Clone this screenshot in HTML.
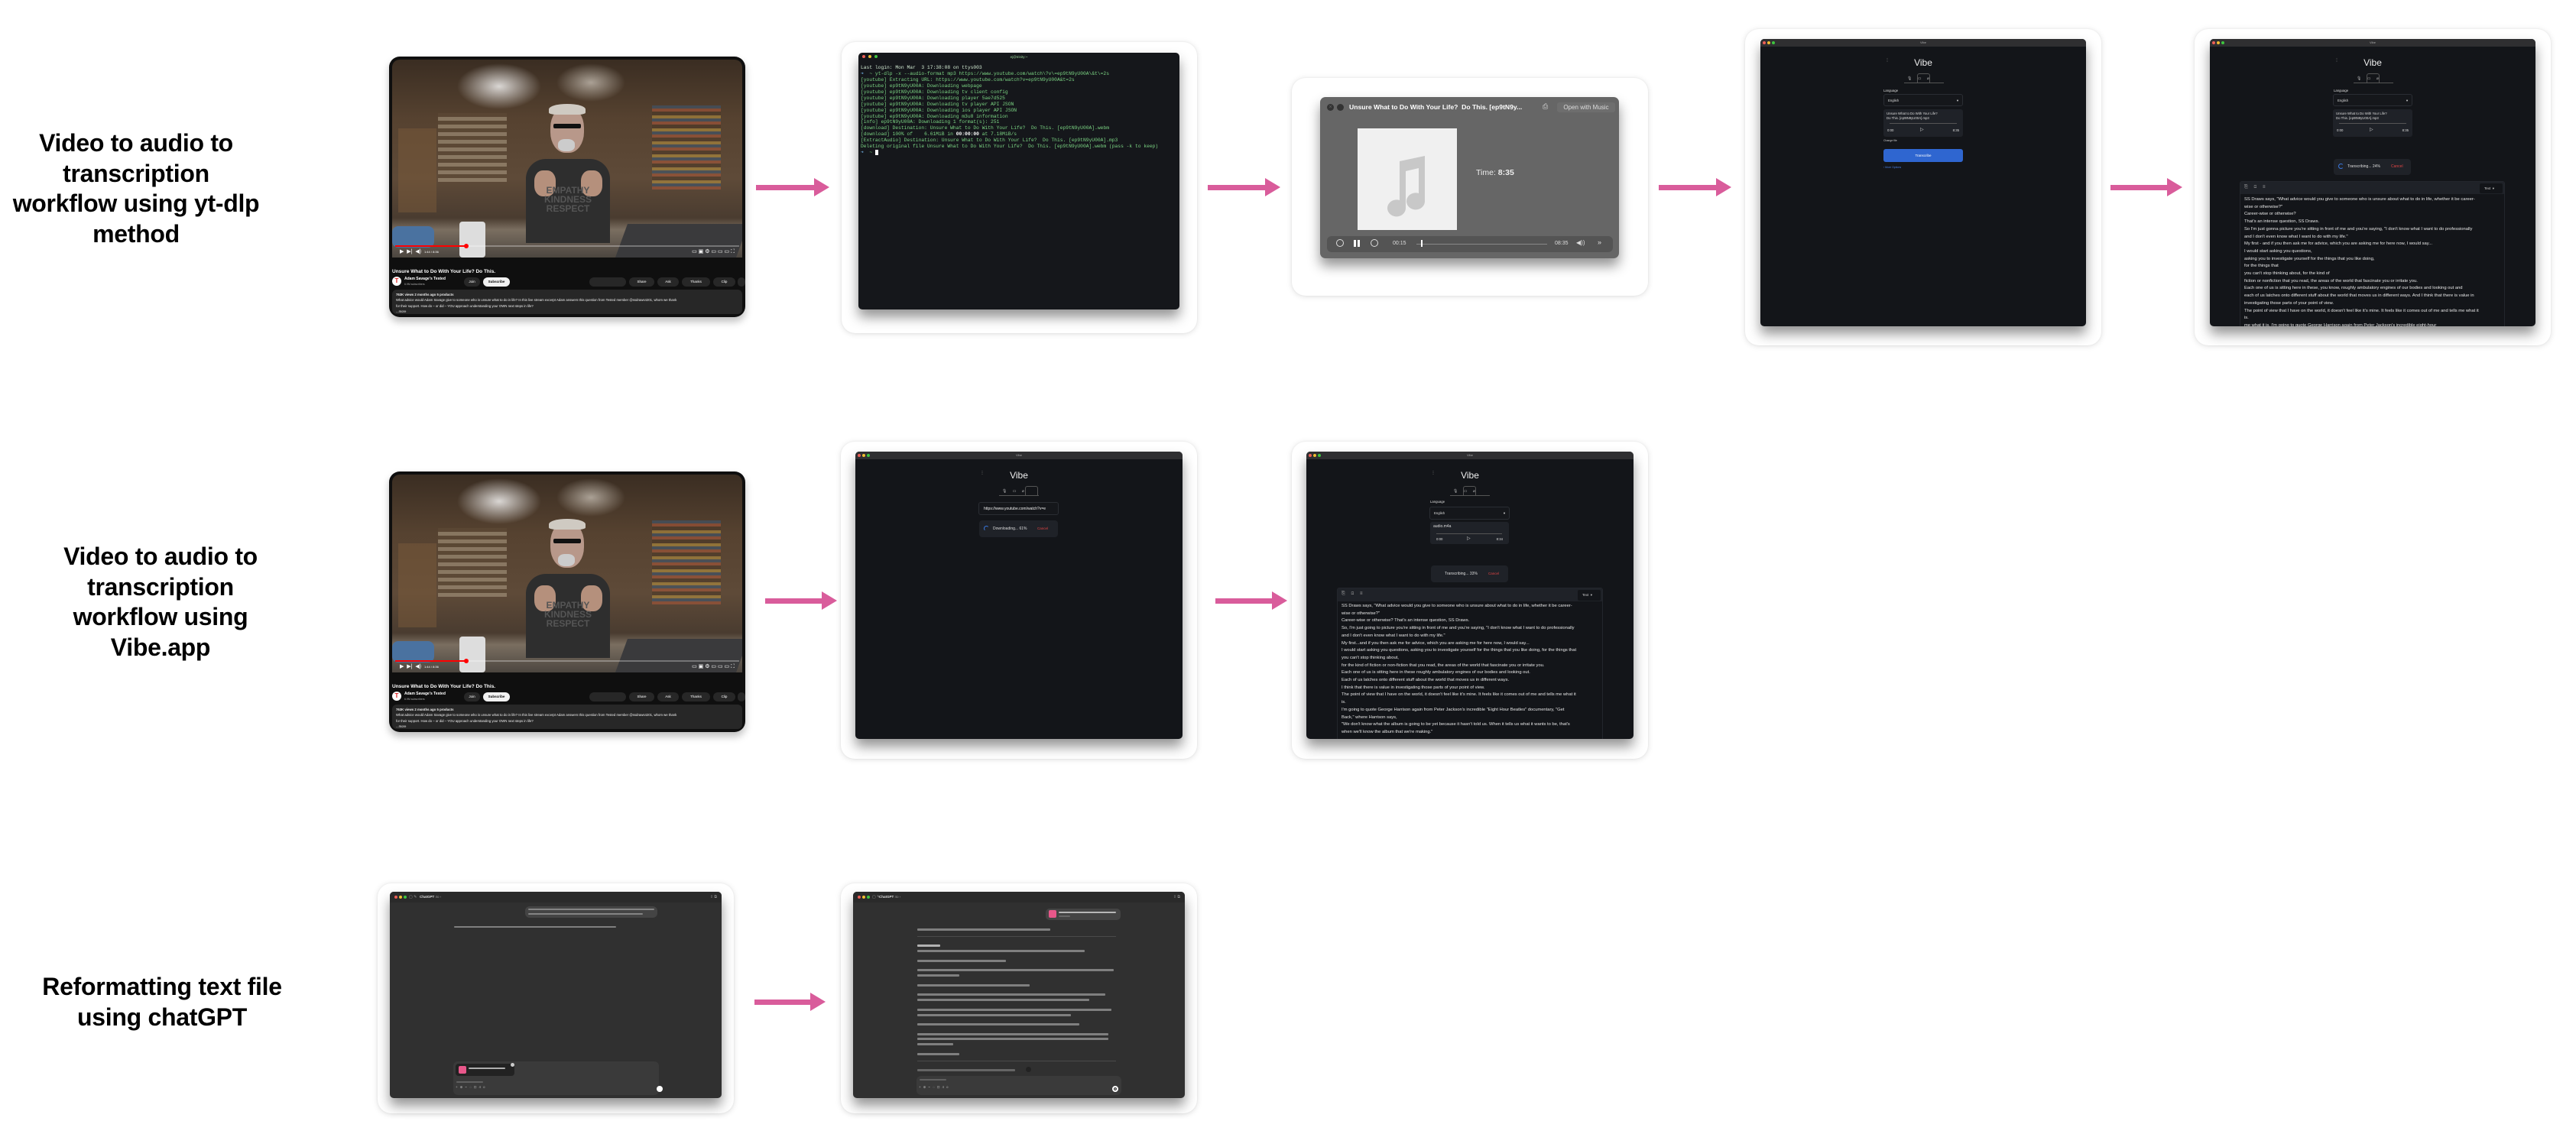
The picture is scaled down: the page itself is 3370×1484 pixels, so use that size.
<!DOCTYPE html>
<html><head><meta charset="utf-8">
<style>
*{margin:0;padding:0;box-sizing:border-box}
body{width:3370px;height:1484px;background:#fff;position:relative;overflow:hidden;font-family:"Liberation Sans",sans-serif}
.lbl{position:absolute;width:420px;text-align:center;font-weight:bold;font-size:32px;line-height:39.5px;color:#000;letter-spacing:-0.3px}
.card{position:absolute;background:#fff;border-radius:18px;box-shadow:0 1px 8px rgba(0,0,0,.13),0 0 2px rgba(0,0,0,.06)}
.arrow{position:absolute;height:24px}
.arrow .s{position:absolute;left:0;top:8.5px;height:7px;background:#d95c9b;right:18px}
.arrow .h{position:absolute;right:0;top:0;width:0;height:0;border-top:12px solid transparent;border-bottom:12px solid transparent;border-left:20px solid #d95c9b}
.win{position:absolute;border-radius:5px;overflow:hidden;box-shadow:0 10px 16px rgba(0,0,0,.42)}
.a{position:absolute}
.tl{position:absolute;top:3px;width:4px;height:4px;border-radius:50%}
.vtb{position:absolute;left:0;top:0;right:0;height:10px;background:#2f2f31;font-size:4px;color:#aaa;text-align:center;line-height:10px}
.vibe{background:#131519}
.vt{position:absolute;left:0;right:0;text-align:center;color:#eee;font-size:12px;top:24px}
.box{position:absolute;border:1px solid #2a2d33;border-radius:3px;background:#15171b}
.fbox{position:absolute;background:#1f2228;border-radius:3px;color:#ddd;font-size:4.3px;line-height:6px;padding:3px 4px}
.pbox{position:absolute;background:#1f2228;border-radius:4px;color:#ddd;font-size:5px}
.tx{position:absolute;color:#e6e6e6;font-size:5.8px;line-height:9.7px;white-space:nowrap}
.mono{font-family:"Liberation Mono",monospace}
.gl{position:absolute;height:3px;background:#9a9a9a;border-radius:1px;opacity:.75}
</style></head><body>

<div class="lbl" style="left:-32px;top:168px">Video to audio to<br>transcription<br>workflow using yt-dlp<br>method</div>
<div class="lbl" style="left:0;top:709px">Video to audio to<br>transcription<br>workflow using<br>Vibe.app</div>
<div class="lbl" style="left:2px;top:1272px">Reformatting text file<br>using chatGPT</div>

<div class="arrow" style="left:989px;top:233px;width:96px"><div class="s"></div><div class="h"></div></div>
<div class="arrow" style="left:1580px;top:233px;width:95px"><div class="s"></div><div class="h"></div></div>
<div class="arrow" style="left:2170px;top:233px;width:95px"><div class="s"></div><div class="h"></div></div>
<div class="arrow" style="left:2761px;top:233px;width:94px"><div class="s"></div><div class="h"></div></div>
<div class="arrow" style="left:1001px;top:774px;width:94px"><div class="s"></div><div class="h"></div></div>
<div class="arrow" style="left:1590px;top:774px;width:94px"><div class="s"></div><div class="h"></div></div>
<div class="arrow" style="left:987px;top:1299px;width:93px"><div class="s"></div><div class="h"></div></div>

<div id="yt1" class="a" style="left:509px;top:74px;width:466px;height:341px;background:#0f0f0f;border-radius:14px;box-shadow:0 6px 10px rgba(0,0,0,.25);overflow:hidden">
  <div class="a" style="left:4px;top:4px;width:458px;height:259px;border-radius:10px 10px 0 0;overflow:hidden;background:linear-gradient(180deg,#3a2d22 0%,#564230 30%,#5e4a38 60%,#4a3c30 80%,#7a6e60 86%,#4c4640 100%)">
    <div class="a" style="left:0;top:0;width:458px;height:259px;background:radial-gradient(ellipse 55px 30px at 140px 35px,rgba(255,255,255,.8),rgba(255,255,255,0)),radial-gradient(ellipse 45px 25px at 260px 30px,rgba(255,250,240,.55),rgba(255,255,255,0))"></div>
    <div class="a" style="left:60px;top:70px;width:90px;height:90px;background:repeating-linear-gradient(0deg,#a89880 0 5px,#5d4a36 5px 10px);opacity:.6"></div>
    <div class="a" style="left:340px;top:60px;width:90px;height:110px;background:repeating-linear-gradient(0deg,#b85a3a 0 4px,#3a5a7a 4px 8px,#c8a040 8px 12px,#4a3624 12px 17px);opacity:.5"></div>
    <div class="a" style="left:8px;top:90px;width:50px;height:110px;background:#7a5a3a;opacity:.5"></div>
    <div class="a" style="left:175px;top:130px;width:110px;height:110px;background:#2e2e2e;border-radius:26px 26px 0 0"></div>
    <div class="a" style="left:207px;top:62px;width:44px;height:60px;background:#b8988a;border-radius:45%"></div>
    <div class="a" style="left:205px;top:58px;width:48px;height:14px;background:#cfcac2;border-radius:50% 50% 20% 20%"></div>
    <div class="a" style="left:211px;top:84px;width:36px;height:6px;background:#111;border-radius:2px"></div>
    <div class="a" style="left:217px;top:104px;width:22px;height:16px;background:#ccc;border-radius:40%"></div>
    <div class="a" style="left:186px;top:145px;width:28px;height:34px;background:#b5907c;border-radius:40%"></div>
    <div class="a" style="left:247px;top:145px;width:28px;height:34px;background:#b5907c;border-radius:40%"></div>
    <div class="a" style="left:190px;top:165px;color:#555;font-weight:bold;font-size:12px;line-height:12px;text-align:center;width:80px">EMPATHY KINDNESS RESPECT</div>
    <div class="a" style="left:88px;top:212px;width:34px;height:47px;background:#ddd;border-radius:4px"></div>
    <div class="a" style="left:0;top:218px;width:55px;height:28px;background:#4a72a0;border-radius:8px"></div>
    <div class="a" style="left:300px;top:215px;width:158px;height:44px;background:#3a3a3c;transform:skewX(-20deg)"></div>
    <div class="a" style="left:4px;top:243px;width:450px;height:2px;background:rgba(255,255,255,.3)"></div>
    <div class="a" style="left:4px;top:243px;width:92px;height:2px;background:#f00"></div>
    <div class="a" style="left:94px;top:241px;width:6px;height:6px;background:#f00;border-radius:50%"></div>
    <div class="a" style="left:10px;top:247px;color:#fff;font-size:7px">▶ &nbsp;▶| &nbsp;◀) &nbsp;<span style="font-size:4px">1:44 / 8:36</span></div>
    <div class="a" style="right:10px;top:247px;color:#fff;font-size:7px">▭ ▣ ⚙ ▭ ▭ ▭ ⛶</div>
  </div>
  <div class="a" style="left:4px;top:278px;color:#fff;font-weight:bold;font-size:6.5px">Unsure What to Do With Your Life? Do This.</div>
  <div class="a" style="left:4px;top:288px;width:12px;height:12px;border-radius:50%;background:#fff;color:#d22;font-weight:bold;font-size:8px;text-align:center;line-height:12px">T</div>
  <div class="a" style="left:20px;top:288px;color:#fff;font-size:5px;font-weight:bold">Adam Savage's Tested</div>
  <div class="a" style="left:20px;top:296px;color:#aaa;font-size:3.5px">6.9M subscribers</div>
  <div class="a" style="left:98px;top:289px;width:21px;height:12px;border-radius:6px;background:#272727;color:#fff;font-size:4.5px;text-align:center;line-height:12px">Join</div>
  <div class="a" style="left:123px;top:289px;width:35px;height:12px;border-radius:6px;background:#f1f1f1;color:#000;font-size:4.5px;text-align:center;line-height:12px;font-weight:bold">Subscribe</div>
  <div class="a" style="left:262px;top:289px;width:48px;height:12px;border-radius:6px;background:#272727"></div>
  <div class="a" style="left:314px;top:289px;width:33px;height:12px;border-radius:6px;background:#272727;color:#fff;font-size:4.5px;line-height:12px;text-align:center">Share</div>
  <div class="a" style="left:351px;top:289px;width:28px;height:12px;border-radius:6px;background:#272727;color:#fff;font-size:4.5px;line-height:12px;text-align:center">Ask</div>
  <div class="a" style="left:383px;top:289px;width:37px;height:12px;border-radius:6px;background:#272727;color:#fff;font-size:4.5px;line-height:12px;text-align:center">Thanks</div>
  <div class="a" style="left:424px;top:289px;width:29px;height:12px;border-radius:6px;background:#272727;color:#fff;font-size:4.5px;line-height:12px;text-align:center">Clip</div>
  <div class="a" style="left:456px;top:289px;width:10px;height:12px;border-radius:6px;background:#272727"></div>
  <div class="a" style="left:4px;top:305px;width:458px;height:32px;background:#272727;border-radius:6px;color:#eee;font-size:4.3px;line-height:7.3px;padding:3px 5px">
    <b>763K views 2 months ago 5 products</b><br>What advice would Adam Savage give to someone who is unsure what to do in life? In this live stream excerpt Adam answers this question from Tested member @ssdraws4201, whom we thank<br>for their support. How do – or did – YOU approach understanding your OWN next steps in life?<br>...more</div>
</div>

<div class="card" style="left:1101px;top:55px;width:465px;height:381px"></div>
<div class="win" style="left:1123px;top:69px;width:420px;height:336px;background:#15171b">
  <div class="tl" style="left:5px;background:#ec5f57"></div>
  <div class="tl" style="left:13px;background:#f0bd31"></div>
  <div class="tl" style="left:21px;background:#3ec43f"></div>
  <div class="a" style="left:0;right:0;top:3px;text-align:center;font-size:4.5px;color:#9ad59a">ej@trinity:~</div>
  <div class="a mono" style="left:3px;top:16px;font-size:6.3px;line-height:7.93px;color:#7bd483;white-space:pre;width:417px;overflow:hidden"><span style="color:#cfe7cf">Last login: Mon Mar  3 17:38:08 on ttys003</span>
<span style="color:#6ca7d8">➜</span>  ~ yt-dlp -x --audio-format mp3 https://www.youtube.com/watch\?v\=ep9tN9yU00A\&amp;t\=2s
[youtube] Extracting URL: https://www.youtube.com/watch?v=ep9tN9yU00A&amp;t=2s
[youtube] ep9tN9yU00A: Downloading webpage
[youtube] ep9tN9yU00A: Downloading tv client config
[youtube] ep9tN9yU00A: Downloading player 5ae7d525
[youtube] ep9tN9yU00A: Downloading tv player API JSON
[youtube] ep9tN9yU00A: Downloading ios player API JSON
[youtube] ep9tN9yU00A: Downloading m3u8 information
[info] ep9tN9yU00A: Downloading 1 format(s): 251
[download] Destination: Unsure What to Do With Your Life?  Do This. [ep9tN9yU00A].webm
[download] 100% of    6.61MiB in <b style="color:#fff">00:00:00</b> at 7.18MiB/s
[ExtractAudio] Destination: Unsure What to Do With Your Life?  Do This. [ep9tN9yU00A].mp3
Deleting original file Unsure What to Do With Your Life?  Do This. [ep9tN9yU00A].webm (pass -k to keep)
<span style="color:#6ca7d8">➜</span>  ~ <span style="background:#fff">&nbsp;</span></div>
</div>

<div class="card" style="left:1690px;top:102px;width:466px;height:285px"></div>
<div class="win" style="left:1727px;top:127px;width:391px;height:211px;background:#666;border-radius:7px">
  <div class="a" style="left:9px;top:9px;width:9px;height:9px;border-radius:50%;background:#333;color:#666;font-size:7px;text-align:center;line-height:9px">×</div>
  <div class="a" style="left:22px;top:9px;width:9px;height:9px;border-radius:50%;background:#333"></div>
  <div class="a" style="left:38px;top:8px;color:#fff;font-weight:bold;font-size:8.6px;white-space:nowrap">Unsure What to Do With Your Life?&nbsp; Do This. [ep9tN9y...</div>
  <div class="a" style="left:291px;top:7px;color:#ddd;font-size:9px">⎙</div>
  <div class="a" style="left:310px;top:7px;width:76px;height:13px;border-radius:3px;background:#6e6e6e;color:#ddd;font-size:8px;text-align:center;line-height:13px;white-space:nowrap">Open with Music</div>
  <div class="a" style="left:49px;top:41px;width:130px;height:133px;background:#f0f0f0">
    <svg width="130" height="133" viewBox="0 0 130 133"><path d="M55 43 L88 36 L88 95 A12 11 0 1 1 80 85 L80 52 L63 56 L63 104 A12 11 0 1 1 55 94 Z" fill="#c8c8c8"/></svg>
  </div>
  <div class="a" style="left:204px;top:93px;color:#eee;font-size:10.5px">Time: <b>8:35</b></div>
  <div class="a" style="left:9px;top:182px;width:374px;height:21px;border-radius:6px;background:#545454">
    <div class="a" style="left:12px;top:4px;width:10px;height:10px;border:1.2px solid #ddd;border-radius:50%"></div>
    <div class="a" style="left:35px;top:5px;width:2.5px;height:9px;background:#fff"></div><div class="a" style="left:40px;top:5px;width:2.5px;height:9px;background:#fff"></div>
    <div class="a" style="left:57px;top:4px;width:10px;height:10px;border:1.2px solid #ddd;border-radius:50%"></div>
    <div class="a" style="left:86px;top:6px;color:#ddd;font-size:7px">00:15</div>
    <div class="a" style="left:117px;top:10px;width:171px;height:1px;background:#888"></div>
    <div class="a" style="left:123px;top:5px;width:1.5px;height:9px;background:#fff"></div>
    <div class="a" style="left:298px;top:6px;color:#ddd;font-size:7px">08:35</div>
    <div class="a" style="left:326px;top:4px;color:#ddd;font-size:8px">◀))</div>
    <div class="a" style="left:354px;top:3px;color:#ddd;font-size:9px">»</div>
  </div>
</div>

<div class="card" style="left:2283px;top:38px;width:466px;height:414px"></div>
<div class="win vibe" style="left:2303px;top:51px;width:426px;height:376px">
  <div class="vtb">Vibe</div>
  <div class="tl" style="left:3px;background:#ec5f57"></div><div class="tl" style="left:9px;background:#f0bd31"></div><div class="tl" style="left:15px;background:#3ec43f"></div>
  <div class="a" style="left:165px;top:25px;color:#aaa;font-size:6px;line-height:2px">·<br>·<br>·</div>
  <div class="vt">Vibe</div>
  <div class="a" style="left:188px;top:47px;width:52px;height:11px;border-bottom:1px solid #555"></div>
  <div class="a" style="left:205px;top:45px;width:17px;height:12px;border:1px solid #555;border-bottom:none;border-radius:3px 3px 0 0;background:#131519"></div>
  <div class="a" style="left:192px;top:49px;color:#bbb;font-size:5px;word-spacing:6px">🎙 ▭ ⌀</div>
  <div class="a" style="left:161px;top:65px;color:#ddd;font-size:4.3px">Language</div>
  <div class="box" style="left:161px;top:72px;width:104px;height:16px;color:#ddd;font-size:4.3px;padding:5px 5px">English<span style="float:right">▾</span></div>
  <div class="fbox" style="left:161px;top:92px;width:104px;height:36px">Unsure What to Do With Your Life?<br>Do This. [ep9tN9yU00A].mp3
    <div class="a" style="left:8px;top:18px;width:88px;height:1px;background:#555"></div>
    <div class="a" style="left:5px;top:25px">0:00</div><div class="a" style="left:48px;top:24px;font-size:6px">▷</div><div class="a" style="right:5px;top:25px">8:35</div></div>
  <div class="a" style="left:161px;top:131px;color:#ccc;font-size:3.5px">Change file</div>
  <div class="a" style="left:161px;top:144px;width:104px;height:17px;background:#2f66d0;border-radius:3px;color:#fff;font-size:4.5px;text-align:center;line-height:17px">Transcribe</div>
  <div class="a" style="left:161px;top:166px;color:#4a7fe0;font-size:3.5px">› More Options</div>
</div>

<div class="card" style="left:2871px;top:38px;width:466px;height:414px"></div>
<div class="win vibe" style="left:2891px;top:51px;width:426px;height:376px">
  <div class="vtb">Vibe</div>
  <div class="tl" style="left:3px;background:#ec5f57"></div><div class="tl" style="left:9px;background:#f0bd31"></div><div class="tl" style="left:15px;background:#3ec43f"></div>
  <div class="a" style="left:165px;top:25px;color:#aaa;font-size:6px;line-height:2px">·<br>·<br>·</div>
  <div class="vt">Vibe</div>
  <div class="a" style="left:188px;top:47px;width:52px;height:11px;border-bottom:1px solid #555"></div>
  <div class="a" style="left:205px;top:45px;width:17px;height:12px;border:1px solid #555;border-bottom:none;border-radius:3px 3px 0 0;background:#131519"></div>
  <div class="a" style="left:192px;top:49px;color:#bbb;font-size:5px;word-spacing:6px">🎙 ▭ ⌀</div>
  <div class="a" style="left:162px;top:65px;color:#ddd;font-size:4.3px">Language</div>
  <div class="box" style="left:161px;top:72px;width:104px;height:16px;color:#ddd;font-size:4.3px;padding:5px 5px">English<span style="float:right">▾</span></div>
  <div class="fbox" style="left:161px;top:92px;width:104px;height:36px">Unsure What to Do With Your Life?<br>Do This. [ep9tN9yU00A].mp3
    <div class="a" style="left:8px;top:18px;width:88px;height:1px;background:#555"></div>
    <div class="a" style="left:5px;top:25px">0:00</div><div class="a" style="left:48px;top:24px;font-size:6px">▷</div><div class="a" style="right:5px;top:25px">8:35</div></div>
  <div class="pbox" style="left:162px;top:157px;width:101px;height:21px"><span class="a" style="left:6px;top:6px;width:7px;height:7px;border:1.3px solid #3a78e0;border-radius:50%;border-right-color:transparent"></span><span class="a" style="left:18px;top:7px">Transcribing... 24%</span><span class="a" style="left:75px;top:7px;color:#e04444">Cancel</span></div>
  <div class="a" style="left:39px;top:186px;width:347px;height:200px;border:1px solid #23262c;border-radius:3px">
    <div class="a" style="left:0;top:0;right:0;height:16px;background:#1f2228"></div>
    <div class="a" style="left:5px;top:4px;color:#aaa;font-size:6px;word-spacing:6px">⎘ ⊡ ≡</div>
    <div class="a" style="right:2px;top:2px;width:30px;height:13px;background:#131519;border-radius:2px;color:#ccc;font-size:4.5px;line-height:13px;padding-left:6px">Text &nbsp;▾</div>
  </div>
  <div class="tx" style="left:45px;top:206px">SS Draws says, "What advice would you give to someone who is unsure about what to do in life, whether it be career-<br>wise or otherwise?"<br>Career-wise or otherwise?<br>That's an intense question, SS Draws.<br>So I'm just gonna picture you're sitting in front of me and you're saying, "I don't know what I want to do professionally<br>and I don't even know what I want to do with my life."<br>My first - and if you then ask me for advice, which you are asking me for here now, I would say...<br>I would start asking you questions,<br>asking you to investigate yourself for the things that you like doing,<br>for the things that<br>you can't stop thinking about, for the kind of<br>fiction or nonfiction that you read, the areas of the world that fascinate you or irritate you.<br>Each one of us is sitting here in these, you know, roughly ambulatory engines of our bodies and looking out and<br>each of us latches onto different stuff about the world that moves us in different ways. And I think that there is value in<br>investigating those parts of your point of view.<br>The point of view that I have on the world, it doesn't feel like it's mine. It feels like it comes out of me and tells me what it<br>is.<br>me what it is. I'm going to quote George Harrison again from Peter Jackson's incredible eight-hour</div>
</div>

<div class="card" style="left:1100px;top:578px;width:466px;height:415px"></div>
<div class="win vibe" style="left:1119px;top:591px;width:428px;height:376px">
  <div class="vtb">Vibe</div>
  <div class="tl" style="left:3px;background:#ec5f57"></div><div class="tl" style="left:9px;background:#f0bd31"></div><div class="tl" style="left:15px;background:#3ec43f"></div>
  <div class="a" style="left:165px;top:25px;color:#aaa;font-size:6px;line-height:2px">·<br>·<br>·</div>
  <div class="vt">Vibe</div>
  <div class="a" style="left:188px;top:47px;width:52px;height:11px;border-bottom:1px solid #555"></div>
  <div class="a" style="left:222px;top:45px;width:17px;height:12px;border:1px solid #555;border-bottom:none;border-radius:3px 3px 0 0;background:#131519"></div>
  <div class="a" style="left:192px;top:49px;color:#bbb;font-size:5px;word-spacing:6px">🎙 ▭ ⌀</div>
  <div class="box" style="left:161px;top:66px;width:105px;height:17px;color:#eee;font-size:5px;padding:5px 6px;white-space:nowrap;overflow:hidden">https://www.youtube.com/watch?v=e</div>
  <div class="pbox" style="left:162px;top:90px;width:103px;height:22px"><span class="a" style="left:6px;top:7px;width:7px;height:7px;border:1.3px solid #3a78e0;border-radius:50%;border-bottom-color:transparent;border-right-color:transparent"></span><span class="a" style="left:18px;top:8px">Downloading... 61%</span><span class="a" style="left:76px;top:8px;color:#e04444;font-size:4.5px">Cancel</span></div>
</div>

<div class="card" style="left:1690px;top:578px;width:466px;height:415px"></div>
<div class="win vibe" style="left:1709px;top:591px;width:428px;height:376px">
  <div class="vtb">Vibe</div>
  <div class="tl" style="left:3px;background:#ec5f57"></div><div class="tl" style="left:9px;background:#f0bd31"></div><div class="tl" style="left:15px;background:#3ec43f"></div>
  <div class="a" style="left:165px;top:25px;color:#aaa;font-size:6px;line-height:2px">·<br>·<br>·</div>
  <div class="vt">Vibe</div>
  <div class="a" style="left:188px;top:47px;width:52px;height:11px;border-bottom:1px solid #555"></div>
  <div class="a" style="left:205px;top:45px;width:17px;height:12px;border:1px solid #555;border-bottom:none;border-radius:3px 3px 0 0;background:#131519"></div>
  <div class="a" style="left:192px;top:49px;color:#bbb;font-size:5px;word-spacing:6px">🎙 ▭ ⌀</div>
  <div class="a" style="left:162px;top:63px;color:#ddd;font-size:4.3px">Language</div>
  <div class="box" style="left:161px;top:72px;width:105px;height:17px;color:#ddd;font-size:4.3px;padding:5px 5px">English<span style="float:right">▾</span></div>
  <div class="fbox" style="left:162px;top:92px;width:103px;height:29px;font-size:5px">audio.m4a
    <div class="a" style="left:8px;top:15px;width:86px;height:1px;background:#555"></div>
    <div class="a" style="left:8px;top:20px;font-size:4.3px">0:00</div><div class="a" style="left:48px;top:19px;font-size:6px">▷</div><div class="a" style="right:8px;top:20px;font-size:4.3px">8:34</div></div>
  <div class="pbox" style="left:163px;top:149px;width:101px;height:22px"><span class="a" style="left:18px;top:8px">Transcribing... 33%</span><span class="a" style="left:75px;top:8px;color:#e04444;font-size:4.5px">Cancel</span></div>
  <div class="a" style="left:40px;top:178px;width:348px;height:200px;border:1px solid #23262c;border-radius:3px">
    <div class="a" style="left:0;top:0;right:0;height:17px;background:#1f2228"></div>
    <div class="a" style="left:5px;top:4px;color:#aaa;font-size:6px;word-spacing:6px">⎘ ⊡ ≡</div>
    <div class="a" style="right:2px;top:2px;width:30px;height:14px;background:#131519;border-radius:2px;color:#ccc;font-size:4.5px;line-height:14px;padding-left:6px">Text &nbsp;▾</div>
  </div>
  <div class="tx" style="left:46px;top:198px">SS Draws says, "What advice would you give to someone who is unsure about what to do in life, whether it be career-<br>wise or otherwise?"<br>Career-wise or otherwise? That's an intense question, SS Draws.<br>So, I'm just going to picture you're sitting in front of me and you're saying, "I don't know what I want to do professionally<br>and I don't even know what I want to do with my life."<br>My first...and if you then ask me for advice, which you are asking me for here now, I would say...<br>I would start asking you questions, asking you to investigate yourself for the things that you like doing, for the things that<br>you can't stop thinking about,<br>for the kind of fiction or non-fiction that you read, the areas of the world that fascinate you or irritate you.<br>Each one of us is sitting here in these roughly ambulatory engines of our bodies and looking out.<br>Each of us latches onto different stuff about the world that moves us in different ways.<br>I think that there is value in investigating those parts of your point of view.<br>The point of view that I have on the world, it doesn't feel like it's mine. It feels like it comes out of me and tells me what it<br>is.<br>I'm going to quote George Harrison again from Peter Jackson's incredible "Eight Hour Beatles" documentary, "Get<br>Back," where Harrison says,<br>"We don't know what the album is going to be yet because it hasn't told us. When it tells us what it wants to be, that's<br>when we'll know the album that we're making."</div>
</div>

<div class="card" style="left:494px;top:1156px;width:466px;height:301px"></div>
<div class="win" style="left:510px;top:1167px;width:434px;height:270px;background:#303030">
  <div class="a" style="left:0;top:0;right:0;height:14px;background:#2a2a2a"></div>
  <div class="tl" style="left:6px;top:5px;background:#ec5f57"></div><div class="tl" style="left:12px;top:5px;background:#f0bd31"></div><div class="tl" style="left:18px;top:5px;background:#3ec43f"></div>
  <div class="a" style="left:25px;top:4px;color:#999;font-size:5px">▢ ✎</div>
  <div class="a" style="left:39px;top:4px;color:#ddd;font-size:4.5px;font-weight:bold">ChatGPT <span style="color:#999;font-weight:normal">4o ›</span></div>
  <div class="a" style="right:6px;top:4px;color:#999;font-size:5px">⇪ ⧉</div>
  <div class="a" style="left:177px;top:19px;width:173px;height:15px;background:#444;border-radius:6px"></div>
  <div class="gl" style="left:181px;top:22px;width:165px;height:2px"></div><div class="gl" style="left:181px;top:28px;width:150px;height:2px"></div>
  <div class="gl" style="left:84px;top:45px;width:212px;height:2px"></div>
  <div class="a" style="left:83px;top:222px;width:269px;height:44px;background:#3a3a3a;border-radius:6px"></div>
  <div class="a" style="left:86px;top:225px;width:77px;height:16px;background:#222;border-radius:4px"></div>
  <div class="a" style="left:90px;top:228px;width:10px;height:10px;background:#e8578a;border-radius:2px"></div>
  <div class="gl" style="left:103px;top:230px;width:48px;height:2px;background:#ddd"></div>
  <div class="a" style="left:158px;top:224px;width:5px;height:5px;border-radius:50%;background:#ccc"></div>
  <div class="gl" style="left:87px;top:248px;width:35px;height:2px;opacity:.4"></div>
  <div class="a" style="left:86px;top:253px;color:#aaa;font-size:4.5px;letter-spacing:3px">+⊕⌁◌⊡4o</div>
  <div class="a" style="left:349px;top:254px;width:8px;height:8px;border-radius:50%;background:#fff"></div>
</div>

<div class="card" style="left:1100px;top:1156px;width:466px;height:301px"></div>
<div class="win" style="left:1116px;top:1167px;width:434px;height:270px;background:#303030">
  <div class="a" style="left:0;top:0;right:0;height:14px;background:#2a2a2a"></div>
  <div class="tl" style="left:6px;top:5px;background:#ec5f57"></div><div class="tl" style="left:12px;top:5px;background:#f0bd31"></div><div class="tl" style="left:18px;top:5px;background:#3ec43f"></div>
  <div class="a" style="left:25px;top:4px;color:#999;font-size:5px">▢ ✎</div>
  <div class="a" style="left:34px;top:4px;color:#ddd;font-size:4.5px;font-weight:bold">ChatGPT <span style="color:#999;font-weight:normal">4o ›</span></div>
  <div class="a" style="right:6px;top:4px;color:#999;font-size:5px">⇪ ⧉</div>
  <div class="a" style="left:252px;top:22px;width:98px;height:15px;background:#444;border-radius:5px"></div>
  <div class="a" style="left:256px;top:24px;width:10px;height:10px;background:#e8578a;border-radius:2px"></div>
  <div class="gl" style="left:269px;top:26px;width:75px;height:2px;background:#ddd"></div>
  <div class="gl" style="left:269px;top:31px;width:15px;height:2px;opacity:.4"></div>
  <div class="gl" style="left:84px;top:48px;width:174px"></div>
  <div class="a" style="left:84px;top:58px;width:260px;height:1px;background:#4a4a4a"></div>
  <div class="gl" style="left:84px;top:69px;width:30px;background:#ddd"></div>
  <div class="gl" style="left:84px;top:76px;width:219px"></div>
  <div class="gl" style="left:84px;top:89px;width:116px"></div>
  <div class="gl" style="left:84px;top:101px;width:257px"></div>
  <div class="gl" style="left:84px;top:108px;width:55px"></div>
  <div class="gl" style="left:84px;top:121px;width:147px"></div>
  <div class="gl" style="left:84px;top:133px;width:246px"></div>
  <div class="gl" style="left:84px;top:140px;width:225px"></div>
  <div class="gl" style="left:84px;top:153px;width:254px"></div>
  <div class="gl" style="left:84px;top:160px;width:201px"></div>
  <div class="gl" style="left:84px;top:172px;width:212px"></div>
  <div class="gl" style="left:84px;top:185px;width:250px"></div>
  <div class="gl" style="left:84px;top:191px;width:250px"></div>
  <div class="gl" style="left:84px;top:198px;width:47px"></div>
  <div class="gl" style="left:84px;top:211px;width:55px"></div>
  <div class="a" style="left:84px;top:221px;width:260px;height:1px;background:#4a4a4a"></div>
  <div class="gl" style="left:84px;top:232px;width:128px;opacity:.5"></div>
  <div class="a" style="left:226px;top:229px;width:7px;height:7px;border-radius:50%;background:#222"></div>
  <div class="a" style="left:83px;top:241px;width:268px;height:25px;background:#3a3a3a;border-radius:6px"></div>
  <div class="gl" style="left:87px;top:245px;width:35px;height:2px;opacity:.4"></div>
  <div class="a" style="left:86px;top:253px;color:#aaa;font-size:4.5px;letter-spacing:3px">+⊕⌁◌⊡4o</div>
  <div class="a" style="left:339px;top:254px;width:8px;height:8px;border-radius:50%;background:#fff;border:2px solid #fff;box-shadow:inset 0 0 0 1.2px #333"></div>
</div>

<script>
var y=document.getElementById('yt1').cloneNode(true);y.id='';y.style.top='617px';document.body.appendChild(y);
</script>
</body></html>
